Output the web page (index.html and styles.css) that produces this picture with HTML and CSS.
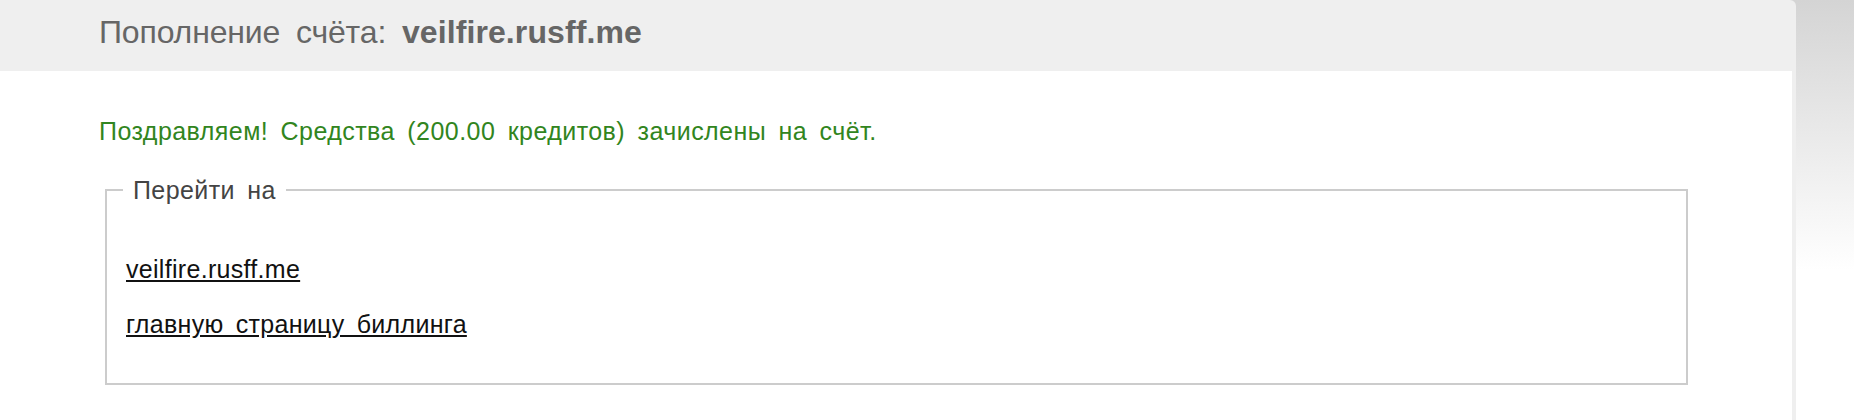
FILE: index.html
```html
<!DOCTYPE html>
<html lang="ru">
<head>
<meta charset="utf-8">
<title>Пополнение счёта</title>
<link rel="stylesheet" href="styles.css">
</head>
<body>
<div class="wrap">
  <div class="head">Пополнение счёта: <b>veilfire.rusff.me</b></div>
  <div class="content">
    <p class="ok">Поздравляем! Средства (200.00 кредитов) зачислены на счёт.</p>
    <fieldset class="goto">
      <legend>Перейти на</legend>
      <div class="links">
        <a href="#">veilfire.rusff.me</a>
        <a href="#">главную страницу биллинга</a>
      </div>
    </fieldset>
  </div>
</div>
</body>
</html>
```

FILE: styles.css
```css
html, body {
  margin: 0;
  padding: 0;
  height: 100%;
}
body {
  background: #fff linear-gradient(#d4d4d4 0, #fff 270px) no-repeat;
  font-family: "Liberation Sans", Arial, Helvetica, sans-serif;
  word-spacing: 5px;
  overflow: hidden;
}
.wrap {
  width: 1796px;
  height: 100%;
  background: #efefef;
  border-top-right-radius: 6px;
  display: flex;
  flex-direction: column;
}
.head {
  height: 71px;
  line-height: 64px;
  font-size: 32px;
  word-spacing: 7px;
  letter-spacing: -0.15px;
  color: #666;
  padding-left: 99px;
  box-sizing: border-box;
  white-space: nowrap;
}
.head b {
  font-weight: bold;
  letter-spacing: 0.1px;
}
.content {
  flex: 1;
  background: #fff;
  margin-right: 4px;
  padding-left: 99px;
  padding-top: 46px;
}
.ok {
  margin: 0;
  font-size: 25px;
  letter-spacing: 0.45px;
  line-height: 28px;
  color: #318520;
}
.goto {
  margin: 31px 0 0 6px;
  width: 1583px;
  box-sizing: border-box;
  border: 2px solid #cccccc;
  padding: 51px 19px 45px 19px;
}
.goto legend {
  font-size: 25px;
  letter-spacing: 0.4px;
  line-height: 28px;
  color: #444;
  padding: 0 10px;
  margin-left: -3px;
}
.links {
  display: flex;
  flex-direction: column;
  align-items: flex-start;
  gap: 27px;
}
.links a {
  font-size: 25px;
  letter-spacing: 0.3px;
  line-height: 28px;
  color: #111;
  text-decoration: underline;
}
```
